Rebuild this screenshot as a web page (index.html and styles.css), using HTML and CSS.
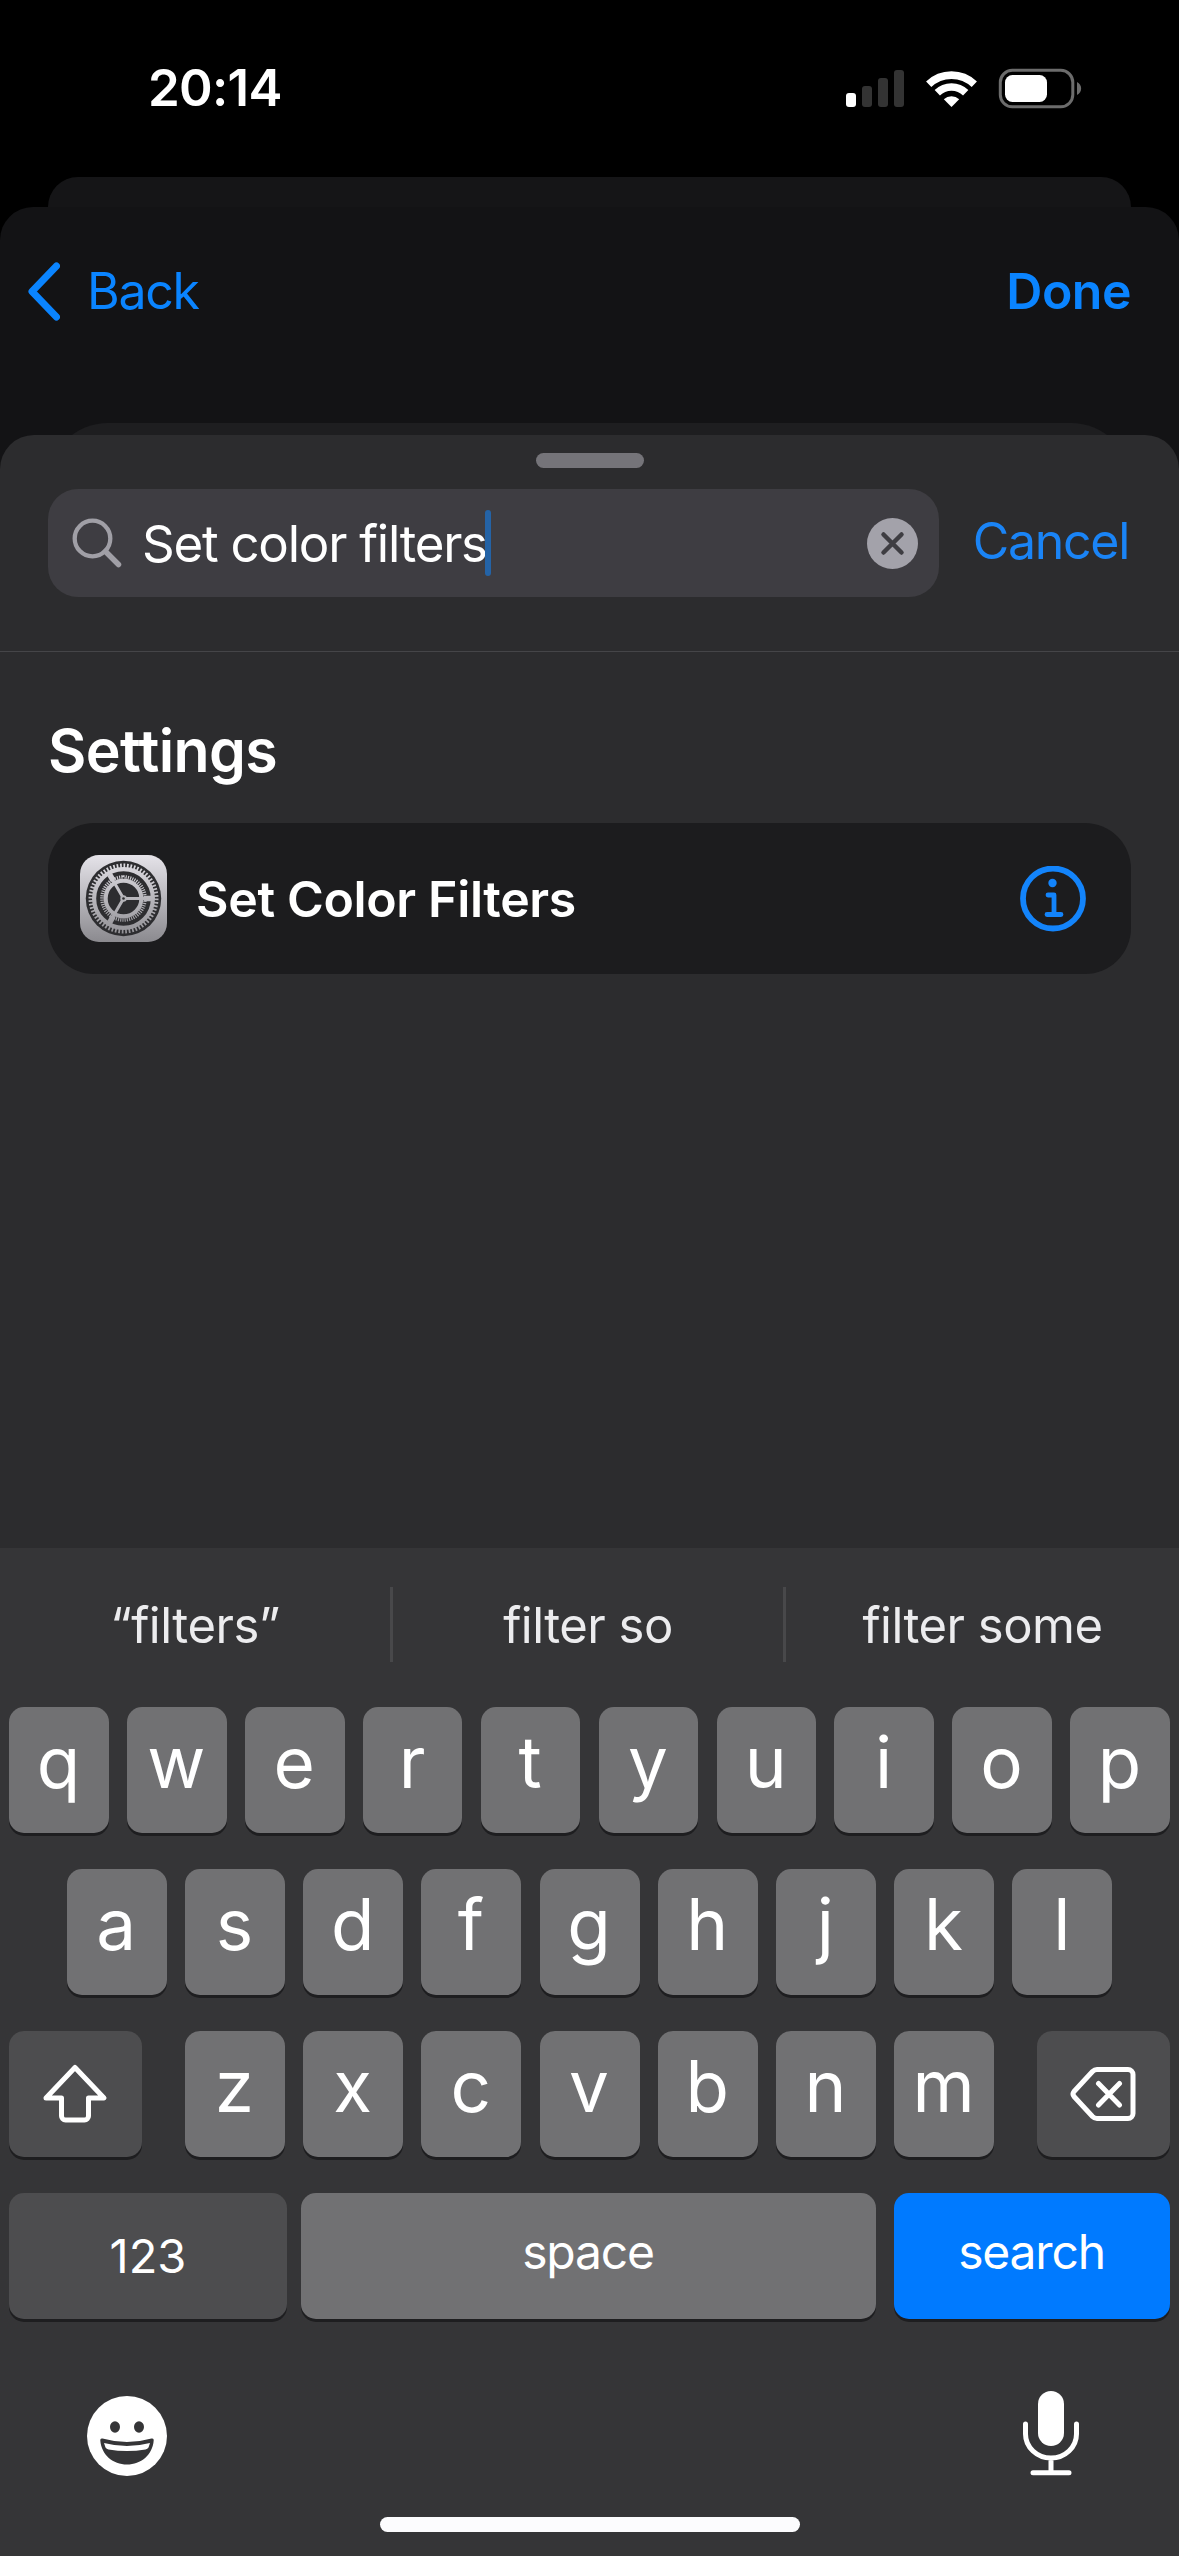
FILE: index.html
```html
<!DOCTYPE html>
<html lang="en">
<head>
<meta charset="utf-8">
<title>Set Color Filters</title>
<link rel="stylesheet" href="styles.css">
</head>
<body>
<div class="phone">
  <header class="status">
    <span class="time">20:14</span>
    <svg class="status-icons" width="240" height="44" viewBox="844 66 240 44">
      <rect x="846" y="92" width="10" height="14" rx="3" fill="#fff"/>
      <g fill="#333"><rect x="862" y="85" width="10" height="21" rx="3"/><rect x="878" y="77" width="10" height="29" rx="3"/><rect x="894" y="69" width="10" height="37" rx="3"/></g>
      <g fill="none" stroke="#fff" stroke-width="7.6">
        <path d="M928.7 83.3A33 33 0 0 1 974.3 83.3"/>
        <path d="M937.3 91.8A20.4 20.4 0 0 1 965.7 91.8"/>
      </g>
      <path d="M951.5 106l-7.7-7.7a11.4 11.4 0 0 1 15.4 0z" fill="#fff"/>
      <rect x="1000.3" y="69.3" width="72.5" height="36.5" rx="12" fill="none" stroke="#6c6c6c" stroke-width="3"/>
      <rect x="1005" y="74" width="42" height="27" rx="7.5" fill="#fff"/>
      <path d="M1077 81c5.500 2.500 5.500 10.500 0 13z" fill="#6c6c6c"/>
    </svg>
  </header>
  <div class="card-behind"></div>
  <div class="editor">
    <nav class="nav">
      <a class="back">
        <svg width="35" height="60" viewBox="0 0 35 60"><path d="M31.500 5L7 30.500L31.500 56" fill="none" stroke="#0a84ff" stroke-width="7" stroke-linecap="round" stroke-linejoin="round"/></svg>
        <span>Back</span>
      </a>
      <a class="done">Done</a>
    </nav>
    <div class="action-card"></div>
    <main class="sheet">
      <div class="grabber"></div>
      <div class="search-row">
        <div class="field">
          <svg width="51" height="51" viewBox="0 0 51 51" fill="none" stroke="#a09fa6" stroke-linecap="round"><circle cx="20.500" cy="20.500" r="17.800" stroke-width="4.300"/><path d="M33.500 33.500L46.500 46.500" stroke-width="5.500"/></svg>
          <span class="query">Set color filters</span><i class="caret"></i>
          <svg class="clear" width="51" height="51" viewBox="0 0 51 51"><circle cx="25.500" cy="25.500" r="25.500" fill="#a3a2aa"/><path d="M16.500 16.500L34.500 34.500M34.500 16.500L16.500 34.500" stroke="#3e3d42" stroke-width="4.500" stroke-linecap="round"/></svg>
        </div>
        <a class="cancel">Cancel</a>
      </div>
      <section class="results">
        <h2>Settings</h2>
        <div class="result">
          <svg width="87" height="87" viewBox="0 0 87 87">
            <defs><linearGradient id="metal" x1="0" y1="0" x2="0" y2="87" gradientUnits="userSpaceOnUse"><stop offset="0" stop-color="#e5e3e9"/><stop offset="1" stop-color="#8b8a8f"/></linearGradient></defs>
            <rect width="87" height="87" rx="19" fill="url(#metal)"/>
            <circle cx="43.500" cy="43.500" r="37.700" fill="#2d2d30"/>
            <g fill="none" stroke="url(#metal)">
              <circle cx="43.500" cy="43.500" r="32.800" stroke-width="4.400" pathLength="120" stroke-dasharray="1 1"/>
              <circle cx="43.500" cy="43.500" r="29.400" stroke-width="4.200"/>
              <circle cx="43.500" cy="43.500" r="21.300" stroke-width="4" pathLength="120" stroke-dasharray="1 1"/>
              <circle cx="43.500" cy="43.500" r="17.800" stroke-width="4"/>
              <path d="M43.500 43.510H71M43.500 43.500L29.750 19.700M43.500 43.500L29.750 67.300" stroke-width="3"/>
              <path d="M64 43.500L71 43.600M33.200 25.700L29.750 19.700M33.200 61.300L29.750 67.300" stroke-width="5.500"/>
            </g>
            <circle cx="43.500" cy="43.500" r="3.200" fill="#b4b3b8"/><circle cx="43.500" cy="43.500" r="1.300" fill="#2d2d30"/>
          </svg>
          <span class="result-name">Set Color Filters</span>
          <svg class="info" width="66" height="66" viewBox="0 0 66 66"><circle cx="33" cy="32.500" r="30" fill="none" stroke="#1384fb" stroke-width="5.800"/><circle cx="32.500" cy="17" r="4.200" fill="#1384fb"/><path d="M28 29h6v19M27 48.500h14" fill="none" stroke="#1384fb" stroke-width="4.800" stroke-linecap="round" stroke-linejoin="round"/></svg>
        </div>
      </section>
    </main>
  </div>
  <section class="keyboard">
    <div class="suggestions"><span>“filters”</span><span>filter so</span><span>filter some</span></div>
    <div class="keys">
      <div class="row"><b>q</b><b>w</b><b>e</b><b>r</b><b>t</b><b>y</b><b>u</b><b>i</b><b>o</b><b>p</b></div>
      <div class="row inner"><b>a</b><b>s</b><b>d</b><b>f</b><b>g</b><b>h</b><b>j</b><b>k</b><b>l</b></div>
      <div class="row spread">
        <b class="dark shift"><svg width="66" height="62" viewBox="0 0 66 62"><path d="M33 4.500L62 35H46.500V53a4 4 0 0 1-4 4h-19a4 4 0 0 1-4-4V35H4z" fill="none" stroke="#fff" stroke-width="5" stroke-linejoin="round"/></svg></b>
        <div class="row inner"><b>z</b><b>x</b><b>c</b><b>v</b><b>b</b><b>n</b><b>m</b></div>
        <b class="dark delete"><svg width="68" height="58" viewBox="0 0 68 58" fill="none" stroke="#fff" stroke-width="5" stroke-linecap="round" stroke-linejoin="round"><path d="M28 4.500h31a5 5 0 0 1 5 5v39a5 5 0 0 1-5 5H28q-2.500 0-4.500-2L5 31.500q-2-2.500 0-5L23.500 6.500q2-2 4.500-2zM29.500 18.500L50.500 40M50.500 18.500L29.500 40"/></svg></b>
      </div>
      <div class="row bottom"><b class="dark num">123</b><b class="word space">space</b><b class="word go">search</b></div>
    </div>
    <div class="tools">
      <svg class="emoji" width="80" height="80" viewBox="0 0 80 80"><circle cx="40" cy="40" r="40" fill="#fff"/><g fill="#353537"><ellipse cx="28" cy="31" rx="5" ry="5.700"/><ellipse cx="52" cy="31" rx="5" ry="5.700"/><path d="M15.500 42.500Q13 42 13.300 44.500C14.500 59 26 68.500 40 68.500S65.500 59 66.700 44.500Q67 42 64.500 42.500Q40 49.500 15.500 42.500z"/></g><path d="M17 47Q40 53 63 47L61.500 51.500Q60.500 53.200 58.500 53.500Q40 56.500 21.500 53.500Q19.500 53.200 18.500 51.500z" fill="#fff"/></svg>
      <svg width="56" height="85" viewBox="0 0 56 85"><rect x="15" y="0" width="26" height="55" rx="13" fill="#fff"/><path d="M2.500 33v10a25.500 24 0 0 0 51 0V33M28 68v13M10 81.700h36" fill="none" stroke="#fff" stroke-width="5" stroke-linecap="round"/></svg>
    </div>
    <div class="home"></div>
  </section>
</div>
</body>
</html>
```
FILE: styles.css
```css
* { box-sizing: border-box; }
body { margin: 0; background: #000; font-family: Inter, "Liberation Sans", sans-serif; color: #fff; }
svg { display: block; flex: none; }
.phone { width: 1179px; height: 2556px; overflow: hidden; display: flex; flex-direction: column; }
.status { height: 177px; flex: none; padding: 0 95px 0 148px; display: flex; justify-content: space-between; align-items: center; }
.time { font-size: 51px; font-weight: 600; line-height: 60px; letter-spacing: -0.7px; padding-bottom: 2px; }
.card-behind { height: 30px; flex: none; margin: 0 48px; border-radius: 30px 30px 0 0; background: #151517; }
.editor { flex: 1; min-height: 0; display: flex; flex-direction: column; background: #131315; border-radius: 33px 33px 0 0; }
.nav { height: 216px; flex: none; padding: 0 48px 49px 25px; display: flex; justify-content: space-between; align-items: center; color: #0a84ff; font-size: 50px; }
.back { display: flex; align-items: center; gap: 27px; letter-spacing: -1.3px; }
.done { font-weight: 600; letter-spacing: -0.5px; }
.action-card { height: 60px; flex: none; margin: 0 48px -48px; border-radius: 60px 60px 0 0; background: #1e1e20; }
.sheet { position: relative; flex: 1; background: #2c2c2e; border-radius: 34px 34px 0 0; }
.grabber { width: 108px; height: 15px; margin: 18px auto 21px; border-radius: 8px; background: #757479; }
.search-row { height: 163px; padding: 0 50px 54px 48px; display: flex; justify-content: space-between; align-items: center; border-bottom: 1px solid #454548; }
.field { width: 891px; height: 108px; padding: 0 21px 0 24px; display: flex; align-items: center; background: #3e3d42; border-radius: 30px; font-size: 51px; }
.query { margin-left: 19px; letter-spacing: -1.25px; }
.caret { width: 6px; height: 66px; margin-left: -2px; border-radius: 3px; background: #2463a6; }
.clear { margin-left: auto; }
.cancel { color: #1a84f6; font-size: 50px; letter-spacing: -1.3px; padding-bottom: 4px; }
.results { padding: 63px 48px 0; }
h2 { margin: 0 0 36px; font-size: 59px; line-height: 72px; font-weight: 600; letter-spacing: -0.6px; }
.result { height: 151px; padding: 0 45px 0 32px; display: flex; align-items: center; background: #1c1c1e; border-radius: 46px; font-size: 50px; font-weight: 600; }
.result-name { margin-left: 29px; letter-spacing: -0.35px; }
.info { margin-left: auto; }
.keyboard { height: 1008px; flex: none; background: #353537; }
.suggestions { height: 159px; padding-top: 39px; display: grid; grid-template-columns: 393px 393px 393px; color: #ececee; font-size: 49px; letter-spacing: -0.5px; }
.suggestions span { height: 75px; line-height: 77px; text-align: center; border-right: 3px solid #48484a; }
.suggestions span:last-child { border-right: 0; }
.keys { display: flex; flex-direction: column; gap: 36px; padding: 0 9px; }
.row { display: flex; justify-content: center; gap: 18.4px; }
.row b { width: 99.5px; height: 126px; padding: 0 1px 16px 0; display: flex; align-items: center; justify-content: center; background: #717173; border-radius: 15px; box-shadow: 0 3px 0 #1e1e20; font-size: 71px; font-weight: 400; line-height: 1; }
.inner { gap: 18.2px; }
.inner b { width: 100px; }
.spread { justify-content: space-between; }
.row .dark { width: 133px; padding: 0; background: #4d4d4f; }
.row .shift, .row .delete { padding-right: 2px; }
.bottom { gap: 0; justify-content: space-between; }
.row .num { width: 278px; font-size: 47px; padding-bottom: 1px; }
.row .word { width: 575px; padding-bottom: 9px; font-size: 48px; letter-spacing: -1.2px; }
.row .space { margin-right: 4px; }
.row .go { width: 276px; background: #007aff; }
.tools { height: 198px; padding: 72px 100px 0 87px; display: flex; justify-content: space-between; align-items: flex-start; }
.emoji { margin-top: 5px; }
.home { width: 420px; height: 15px; margin: 0 auto; border-radius: 8px; background: #fcfcfe; }
```
